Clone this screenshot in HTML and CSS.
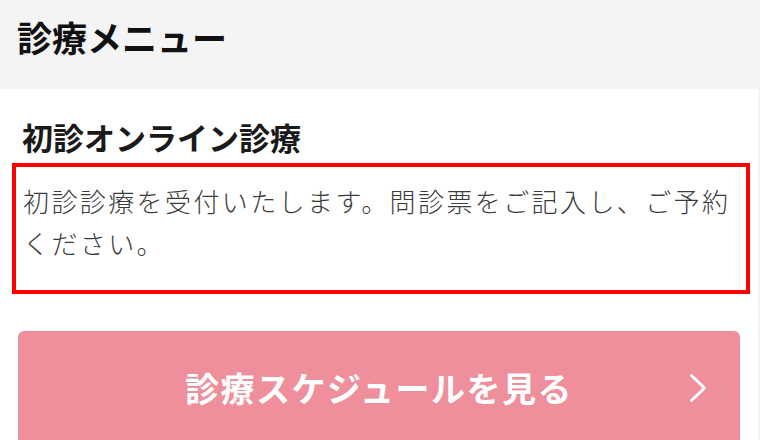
FILE: index.html
```html
<!DOCTYPE html>
<html lang="ja">
<head>
  <meta charset="UTF-8" />
  <title>診療メニュー</title>
  <meta name="viewport" content="width=device-width, initial-scale=1.0">
  <link rel="stylesheet" href="styles.css">
</head>
<body>
  <div class="header">
    <h1 class="page-title">診療メニュー</h1>
  </div>
  <div class="content">
    <h2 class="section-title">初診オンライン診療</h2>
    <div class="notice">
      <p>初診診療を受付いたします。問診票をご記入し、ご予約ください。</p>
    </div>
    <a class="schedule-btn" href="#">
      <span class="btn-label">診療スケジュールを見る</span>
      <svg class="btn-arrow" xmlns="http://www.w3.org/2000/svg" width="18" height="30" viewBox="0 0 18 30" fill="none" stroke="currentColor" stroke-width="3" stroke-linecap="round" stroke-linejoin="round">
        <polyline points="2.5,2.5 15.5,15 2.5,27.5" />
      </svg>
    </a>
  </div>
</body>
</html>
```

FILE: styles.css
```css
body {
  margin: 0;
  padding: 0;
  background-color: #f4f4f4;
  font-family: "Noto Sans CJK JP", "Noto Sans", sans-serif;
  height: 440px;
  overflow: hidden;
}

.header {
  height: 89px;
  box-sizing: border-box;
  padding: 20px 0 0 17px;
  background-color: #f4f4f4;
}

.page-title {
  margin: 0;
  font-size: 35px;
  line-height: 34px;
  font-weight: bold;
  color: #111;
}

.content {
  background-color: #fff;
  margin-right: 2px;
  height: 351px;
  overflow: hidden;
}

.section-title {
  margin: 0;
  padding: 33px 0 0 22px;
  font-size: 31px;
  line-height: 30px;
  font-weight: bold;
  color: #1a1a1a;
}

.notice {
  margin: 11px 8px 0 12px;
  border: 4px solid #f00;
  padding: 13px 8px 26px 7px;
}

.notice p {
  margin: 0;
  font-size: 26px;
  font-weight: 300;
  line-height: 42px;
  letter-spacing: 2.4px;
  color: #3c3c3c;
}

.schedule-btn {
  display: grid;
  grid-template-columns: 1fr auto 1fr;
  align-items: center;
  margin: 37px 18px 0 18px;
  height: 114px;
  padding: 0 33px;
  background-color: #ef8f9c;
  border-radius: 6px;
  color: #fff;
  text-decoration: none;
}

.btn-label {
  grid-column: 2;
  font-size: 34px;
  font-weight: bold;
  letter-spacing: 1.5px;
  line-height: 40px;
}

.btn-arrow {
  grid-column: 3;
  justify-self: end;
}
```
